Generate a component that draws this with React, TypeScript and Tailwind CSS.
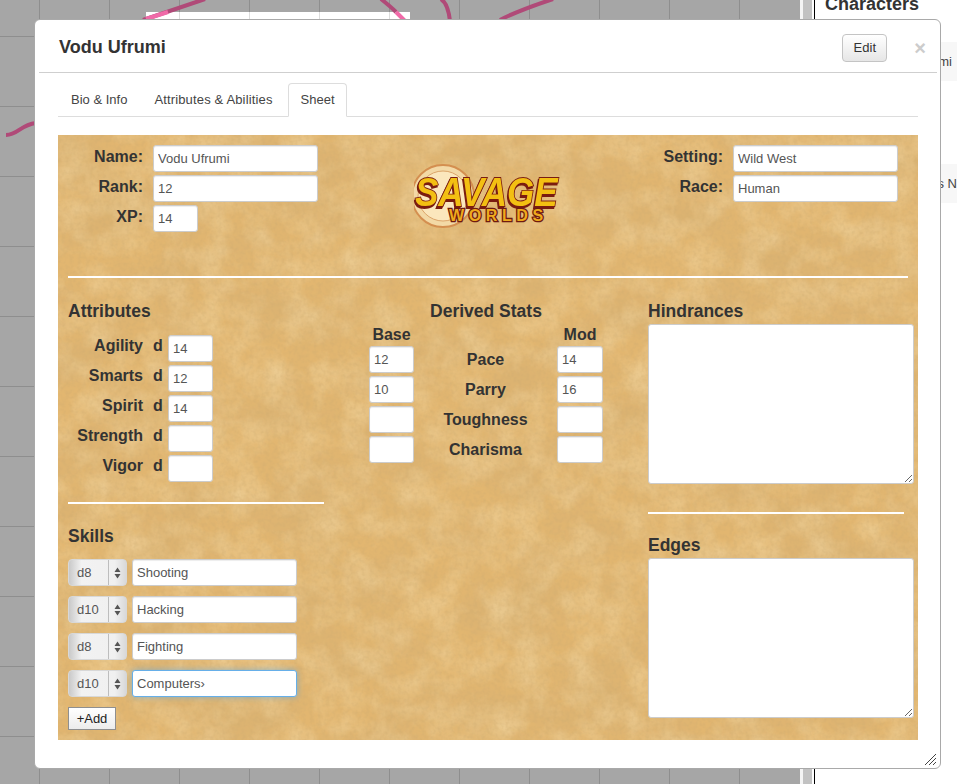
import type { ReactNode } from 'react'

const FONT = "font-['Liberation_Sans',Arial,sans-serif]"
const FIELD =
  'h-[27px] rounded-[3px] border border-[#cccccc] bg-white px-1 text-[13px] text-[#555555] shadow-[inset_0_1px_1px_rgba(0,0,0,0.075)] outline-none'

function Field({ value = '', width = 'w-[165px]' }: { value?: string; width?: string }) {
  return <input readOnly value={value} className={`${FIELD} ${width}`} />
}

function Label({ children, className = '' }: { children: ReactNode; className?: string }) {
  return <span className={`text-base leading-[22px] font-bold text-[#333333] ${className}`}>{children}</span>
}

function Heading({ children, className = '' }: { children: ReactNode; className?: string }) {
  return <h4 className={`text-[17.5px] leading-5 font-bold text-[#333333] ${className}`}>{children}</h4>
}

function Divider({ className = '' }: { className?: string }) {
  return <div className={`h-0.5 bg-white ${className}`} />
}

// Paper grain behind the sheet
function Parchment() {
  return (
    <svg className="absolute inset-0 h-full w-full" aria-hidden="true">
      <defs>
        <filter id="mottle" x="0" y="0" width="100%" height="100%">
          <feTurbulence type="fractalNoise" baseFrequency="0.014 0.02" numOctaves="6" seed="11" />
          <feColorMatrix values="0 0 0 0 0.66  0 0 0 0 0.43  0 0 0 0 0.17  1.1 0 0 0 -0.36" />
        </filter>
        <filter id="light" x="0" y="0" width="100%" height="100%">
          <feTurbulence type="fractalNoise" baseFrequency="0.035" numOctaves="5" seed="23" />
          <feColorMatrix values="0 0 0 0 0.93  0 0 0 0 0.75  0 0 0 0 0.44  0.8 0 0 0 -0.28" />
        </filter>
        <filter id="grain" x="0" y="0" width="100%" height="100%">
          <feTurbulence type="fractalNoise" baseFrequency="0.25" numOctaves="2" seed="3" />
          <feColorMatrix values="0 0 0 0 0.6  0 0 0 0 0.4  0 0 0 0 0.16  0.7 0 0 0 -0.28" />
        </filter>
      </defs>
      <rect width="100%" height="100%" fill="#e2b670" />
      <rect width="100%" height="100%" filter="url(#mottle)" />
      <rect width="100%" height="100%" filter="url(#light)" />
      <rect width="100%" height="100%" filter="url(#grain)" />
    </svg>
  )
}

function SavageLogo() {
  return (
    <svg width="150" height="68" viewBox="0 0 150 68" aria-label="Savage Worlds">
      <circle cx="29" cy="33" r="31" fill="#f3d9a6" stroke="#d48f50" strokeWidth="2" />
      <circle cx="29" cy="33" r="25" fill="#fbe7bd" stroke="#dca56a" strokeWidth="1" />
      <g className="[filter:drop-shadow(-1px_2px_0_#7a1c10)]">
        <text
          transform="scale(1 1.16)"
          x="1"
          y="37"
          fontFamily="Liberation Sans"
          fontWeight="700"
          fontStyle="italic"
          fontSize="35"
          fill="#f3bf12"
          stroke="#7a1c10"
          strokeWidth="1.6"
          paintOrder="stroke"
        >
          SAVAGE
        </text>
      </g>
      <text
        x="35"
        y="58"
        fontFamily="Liberation Sans"
        fontWeight="700"
        fontSize="16"
        letterSpacing="4.6"
        fill="#eeaa1c"
        stroke="#6f1a10"
        strokeWidth="2.6"
        paintOrder="stroke"
      >
        WORLDS
      </text>
    </svg>
  )
}

function DieSelect({ value }: { value: string }) {
  return (
    <div className="flex h-[27px] w-[59px] items-center rounded-[4px] border border-[#d8d8d8] bg-[linear-gradient(to_right,#c9c9c9,#f2f2f2_22%,#f0f0f0_80%,#d9d9d9)] text-[13px] text-[#555555]">
      <span className="flex-1 pl-2">{value}</span>
      <span className="flex h-full w-[18px] items-center justify-center border-l border-[#bdbdbd]">
        <svg width="7" height="12" viewBox="0 0 7 12" aria-hidden="true">
          <path d="M3.5 0.5 L6.5 5 H0.5 Z M0.5 7 H6.5 L3.5 11.5 Z" fill="#555555" />
        </svg>
      </span>
    </div>
  )
}

function SkillRow({ die, name, focused }: { die: string; name: string; focused?: boolean }) {
  return (
    <div className="flex items-center gap-[5px]">
      <DieSelect value={die} />
      <input
        readOnly
        value={name}
        className={`${FIELD} w-[165px] ${focused ? 'border-[#66afe9]! shadow-[0_0_6px_rgba(102,175,233,0.7)]!' : ''}`}
      />
    </div>
  )
}

const ATTRIBUTES = [
  ['Agility', '14'],
  ['Smarts', '12'],
  ['Spirit', '14'],
  ['Strength', ''],
  ['Vigor', ''],
]

const DERIVED = [
  ['12', 'Pace', '14'],
  ['10', 'Parry', '16'],
  ['', 'Toughness', ''],
  ['', 'Charisma', ''],
]

function Sheet() {
  return (
    <div className="relative mt-[18px] h-[605px] w-[860px] overflow-hidden">
      <Parchment />
      <div className="relative px-2.5 pt-2.5">
        <div className="flex h-[131px] items-start justify-between">
          <div className="flex flex-col gap-[3px]">
            <div className="flex items-center gap-2.5">
              <Label className="-mt-1 w-[75px] text-right">Name:</Label>
              <Field value="Vodu Ufrumi" />
            </div>
            <div className="flex items-center gap-2.5">
              <Label className="-mt-1 w-[75px] text-right">Rank:</Label>
              <Field value="12" />
            </div>
            <div className="flex items-center gap-2.5">
              <Label className="-mt-1 w-[75px] text-right">XP:</Label>
              <Field value="14" width="w-[45px]" />
            </div>
          </div>
          <div className="mt-[18px] ml-3">
            <SavageLogo />
          </div>
          <div className="mr-2.5 flex flex-col gap-[3px]">
            <div className="flex items-center gap-2.5">
              <Label className="-mt-1 w-[75px] text-right">Setting:</Label>
              <Field value="Wild West" />
            </div>
            <div className="flex items-center gap-2.5">
              <Label className="-mt-1 w-[75px] text-right">Race:</Label>
              <Field value="Human" />
            </div>
          </div>
        </div>
        <Divider className="w-[840px]" />

        <div className="grid grid-cols-[256px_234px_266px] gap-x-[45px] pt-[23px]">
          <div>
            <Heading>Attributes</Heading>
            <div className="mt-[14px] flex flex-col gap-[3px]">
              {ATTRIBUTES.map(([name, value]) => (
                <div key={name} className="flex items-center">
                  <Label className="-mt-1.5 w-[75px] text-right">{name}</Label>
                  <Label className="-mt-1.5 ml-[10px] w-[15px]">d</Label>
                  <Field value={value} width="w-[45px]" />
                </div>
              ))}
            </div>
            <Divider className="mt-5" />
            <Heading className="mt-[22px]">Skills</Heading>
            <div className="mt-[13px] flex flex-col gap-2.5">
              <SkillRow die="d8" name="Shooting" />
              <SkillRow die="d10" name="Hacking" />
              <SkillRow die="d8" name="Fighting" />
              <SkillRow die="d10" name="Computers›" focused />
            </div>
            <button className="mt-[10px] h-[23px] w-12 border border-[#8f8f8f] bg-[linear-gradient(#ffffff,#ececec)] text-[13px] text-[#222222]">
              +Add
            </button>
          </div>

          <div>
            <Heading className="text-center">Derived Stats</Heading>
            <div className="mt-[3px] flex justify-between">
              <Label className="w-[45px] text-center">Base</Label>
              <Label className="w-[46px] text-center">Mod</Label>
            </div>
            <div className="flex flex-col gap-[3px]">
              {DERIVED.map(([base, name, mod]) => (
                <div key={name} className="flex items-center justify-between">
                  <Field value={base} width="w-[45px]" />
                  <Label>{name}</Label>
                  <Field value={mod} width="w-[46px]" />
                </div>
              ))}
            </div>
          </div>

          <div>
            <Heading>Hindrances</Heading>
            <textarea readOnly className="mt-[3px] block h-40 w-[266px] rounded-[3px] border border-[#cccccc] bg-white outline-none" />
            <Divider className="mt-[28px] w-64" />
            <Heading className="mt-[21px]">Edges</Heading>
            <textarea readOnly className="mt-[3px] block h-40 w-[266px] rounded-[3px] border border-[#cccccc] bg-white outline-none" />
          </div>
        </div>
      </div>
    </div>
  )
}

function Modal() {
  return (
    <div className="absolute top-[19px] left-[34px] h-[750px] w-[907px] rounded-md border border-[#a9a9a9] bg-white">
      <div className="mr-[3px] ml-[4px] flex h-[53px] items-center border-b border-[#cfcfcf] pl-5">
        <h3 className="mt-[3px] flex-1 text-[18px] font-bold text-[#333333]">Vodu Ufrumi</h3>
        <button className="mt-[3px] h-7 w-[45px] rounded-[4px] border border-[#c4c4c4] bg-[linear-gradient(#ffffff,#e6e6e6)] text-[13px] text-[#333333]">
          Edit
        </button>
        <span className="mt-[3px] mr-[11px] ml-[27px] text-xl leading-none font-bold text-[#cccccc]">×</span>
      </div>

      <div className="ml-[23px] w-[860px]">
        <div className="mt-2.5 flex h-[34px] border-b border-[#dddddd] text-[13px] text-[#444444]">
          <span className="mr-px px-[13px] pt-[7px]">Bio &amp; Info</span>
          <span className="mr-[2px] px-[13px] pt-[7px] tracking-[0.15px]">Attributes &amp; Abilities</span>
          <span className="h-[34px] w-[59px] rounded-t-[4px] border border-[#dddddd] border-b-white bg-white pt-[6px] pl-3">Sheet</span>
        </div>
        <Sheet />
      </div>

      {/* Resize grip */}
      <svg className="absolute right-[3px] bottom-[2px]" width="13" height="13" viewBox="0 0 13 13" aria-hidden="true">
        <path d="M1 12 L12 1 M5 12 L12 5 M9 12 L12 9" stroke="#444444" strokeWidth="1" />
      </svg>
    </div>
  )
}

export default function App() {
  return (
    <div className={`relative flex h-[784px] w-[957px] overflow-hidden bg-white ${FONT}`}>
      <div className="relative h-full w-[800px] bg-[#a6a6a6] bg-[linear-gradient(to_right,#8e8e8e_1px,transparent_1px),linear-gradient(to_bottom,#8e8e8e_1px,transparent_1px)] bg-size-[70px_70px] bg-position-[39px_36px]">
        <div className="absolute top-3 left-[146px] h-2 w-[264px] bg-white bg-[linear-gradient(to_right,#dddddd_1px,transparent_1px)] bg-size-[70px_100%] bg-position-[33px_0]" />
        {/* Drawn routes on the map behind the dialog */}
        <svg className="absolute inset-0" width="800" height="140" viewBox="0 0 800 140" fill="none" strokeWidth="4" aria-hidden="true">
          <path d="M6 135 C 18 135, 20 125, 36 123" stroke="#b04a78" />
          <path d="M143 20 L205 -1" stroke="#b04a78" />
          <path d="M146 19 L168 12" stroke="#f06aa8" />
          <path d="M381 -1 C 386 3, 391 7, 396 12" stroke="#b04a78" />
          <path d="M396 12 C 399 15, 402 18, 405 21" stroke="#f06aa8" />
          <path d="M441 -1 C 447 3, 449 12, 450 21" stroke="#b04a78" />
          <path d="M500 20 C 515 12, 535 5, 553 -1" stroke="#b04a78" />
        </svg>
      </div>
      <div className="w-[14px] bg-[linear-gradient(to_right,#f4f4f4_3px,#c2c2c2_3px,#c2c2c2_12px,#ffffff_12px)]" />
      <div className="relative flex-1 border-l border-black">
        <h2 className="absolute -top-[6px] left-[10px] text-[18px] leading-5 font-bold whitespace-nowrap text-[#333333]">Characters</h2>
        <div className="absolute top-[42px] right-0 flex h-[39px] w-[60px] items-center justify-end bg-[#f7f7f7] pr-[5px] text-[13px] text-[#444444]">mi</div>
        <div className="absolute top-[164px] right-0 flex h-[39px] w-[60px] items-center justify-end bg-[#f7f7f7] text-[13px] whitespace-nowrap text-[#444444]">s N</div>
      </div>
      <Modal />
    </div>
  )
}
